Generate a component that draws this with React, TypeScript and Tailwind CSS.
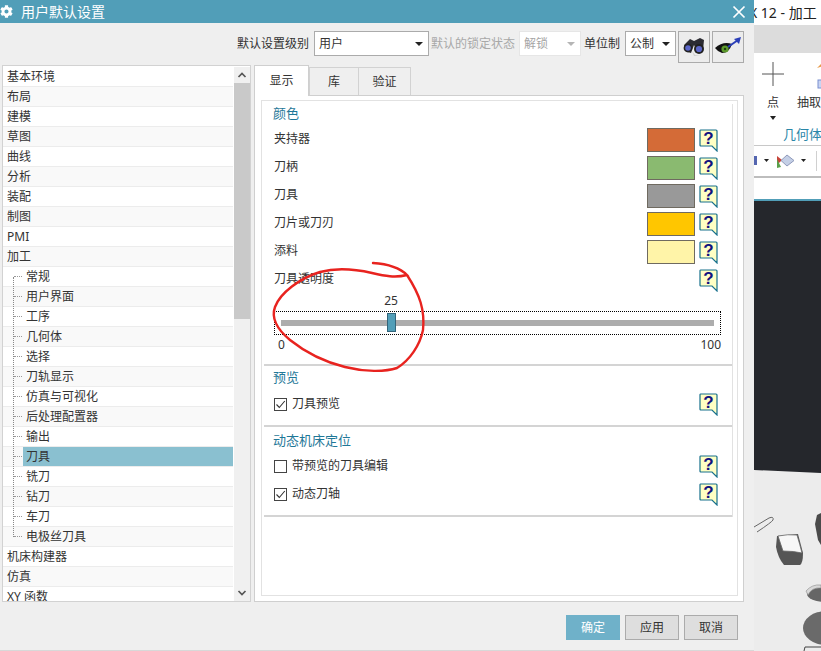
import { FaCog } from "react-icons/fa";

const top = ["基本环境", "布局", "建模", "草图", "曲线", "分析", "装配", "制图", "PMI", "加工"];
const kids = ["常规", "用户界面", "工序", "几何体", "选择", "刀轨显示", "仿真与可视化", "后处理配置器", "输出", "刀具", "铣刀", "钻刀", "车刀", "电极丝刀具"];
const tail = ["机床构建器", "仿真", "XY 函数"];
const colors = [
  ["夹持器", "bg-[#d46b37]"],
  ["刀柄", "bg-[#8aba70]"],
  ["刀具", "bg-[#999999]"],
  ["刀片或刀刃", "bg-[#ffc600]"],
  ["添料", "bg-[#fff4a8]"],
];

function Help() {
  return (
    <svg width="19" height="23" viewBox="0 0 19 23" className="shrink-0">
      <path d="M1.5 1 H17 Q18 1 18 2 V22 L13 17 H2 Q1 17 1 16 V2 Q1 1 1.5 1 Z" fill="#ffffc4" stroke="#17708c" strokeWidth="1.2" />
      <text x="9.5" y="15" textAnchor="middle" fontSize="17" fontWeight="700" fill="#12127e" fontFamily="Liberation Sans, sans-serif">?</text>
    </svg>
  );
}

function Caret({ light }: { light?: boolean }) {
  return <span className={`w-0 h-0 border-x-[4px] border-x-transparent border-t-[4px] ${light ? "border-t-[#b5b5b5]" : "border-t-[#222]"}`} />;
}

function Select({ w, label, light }: { w: string; label: string; light?: boolean }) {
  return (
    <div className={`${w} h-[25px] flex items-center justify-between pl-[4px] pr-[5px] bg-white border ${light ? "border-[#e6e6e6] text-[#a5a5a5]" : "border-[#ababab] text-[#333]"}`}>
      <span>{label}</span>
      <Caret light={light} />
    </div>
  );
}

function Check({ on }: { on?: boolean }) {
  return (
    <span className="w-[13px] h-[13px] border border-[#444] bg-white flex items-center justify-center shrink-0">
      {on && (
        <svg width="11" height="11" viewBox="0 0 11 11">
          <path d="M1.5 5.5 L4.3 8.5 L9.8 2" fill="none" stroke="#333" strokeWidth="1.1" />
        </svg>
      )}
    </span>
  );
}

function Heading({ children }: { children: string }) {
  return <div className="h-[20px] leading-[20px] pl-[9px] text-[13px] text-[#1f7898]">{children}</div>;
}

function CheckRow({ label, on }: { label: string; on?: boolean }) {
  return (
    <div className="h-[28px] flex items-center pl-[10px] pr-[14px]">
      <Check on={on} />
      <span className="ml-[5px] flex-1">{label}</span>
      <Help />
    </div>
  );
}

function TreeRow({ label, i, child, sel }: { label: string; i: number; child?: boolean; sel?: boolean }) {
  return (
    <div className={`h-[20px] flex items-center border-b border-[#ececec] ${i % 2 ? "bg-[#f9f9f9]" : "bg-white"}`}>
      {child && <span className="ml-[11px] w-[8px] border-t border-dotted border-[#999] shrink-0" />}
      <span className={`h-[19px] leading-[20px] ${child ? "ml-[1px] pl-[3px]" : "pl-[4px]"} ${sel ? "flex-1 bg-[#8ac0d0]" : ""}`}>{label}</span>
    </div>
  );
}

function Binoculars() {
  return (
    <svg width="24" height="20" viewBox="0 0 24 20">
      <path d="M2 8 L8 2 L12 4 L18 1 L22 3 L21 13 L14 12 L12 8 L9 16 L3 14 Z" fill="#2c2c33" />
      <circle cx="6" cy="11" r="4.4" fill="#222" />
      <circle cx="6" cy="11" r="2.8" fill="#5b66c8" />
      <circle cx="17" cy="12" r="5" fill="#222" />
      <circle cx="17" cy="12" r="3.1" fill="#5b66c8" />
      <path d="M10 14 L13 18 L19 19 L12 19 Z" fill="#cfcfcf" />
    </svg>
  );
}

function EyeArrow() {
  return (
    <svg width="28" height="22" viewBox="0 0 28 22">
      <path d="M1 12 Q9 5 18 8 Q15 17 8 17 Q4 16 1 12 Z" fill="#111" />
      <circle cx="11" cy="13" r="3.6" fill="#5d9a2c" />
      <circle cx="11" cy="13" r="1.2" fill="#1d3b10" />
      <path d="M14 11 L24 4" stroke="#2b3fb8" strokeWidth="2" />
      <path d="M27 1 L20 3 L25 8 Z" fill="#2b3fb8" />
    </svg>
  );
}

function Dialog() {
  let row = 0;
  return (
    <div className="w-[754px] h-full shrink-0 flex flex-col bg-[#efefef] border-b border-[#d8d8d8]">
      <div className="h-[23px] bg-[#519eb8] flex items-center text-white shrink-0">
        <FaCog className="w-[13px] h-[13px] shrink-0" />
        <span className="ml-[8px] text-[14px] flex-1">用户默认设置</span>
        <svg width="14" height="14" viewBox="0 0 14 14" className="mr-[8px]">
          <path d="M1.5 1.5 L12.5 12.5 M12.5 1.5 L1.5 12.5" stroke="#fff" strokeWidth="1.7" />
        </svg>
      </div>

      <div className="h-[42px] shrink-0 flex items-start justify-end pt-[8px] pr-[10px]">
        <span className="h-[25px] leading-[25px] mr-[5px]">默认设置级别</span>
        <Select w="w-[115px]" label="用户" />
        <span className="h-[25px] leading-[25px] ml-[2px] mr-[4px] text-[#a8a8a8]">默认的锁定状态</span>
        <Select w="w-[62px]" label="解锁" light />
        <span className="h-[25px] leading-[25px] ml-[3px] mr-[5px]">单位制</span>
        <Select w="w-[51px]" label="公制" />
        <div className="w-[32px] h-[32px] ml-[2px] flex items-center justify-center bg-[#ececec] border border-[#ababab]"><Binoculars /></div>
        <div className="w-[32px] h-[32px] ml-[2px] flex items-center justify-center bg-[#ececec] border border-[#ababab]"><EyeArrow /></div>
      </div>

      <div className="h-[537px] shrink-0 flex pl-[2px] pr-[10px]">
        <div className="w-[249px] h-full shrink-0 flex border border-[#d2d2d2] bg-white pt-[1px] overflow-hidden">
          <div className="w-[230px] shrink-0 h-full overflow-hidden">
            {top.map((t) => <TreeRow key={t} label={t} i={row++} />)}
            <div className="relative">
              <span className="absolute left-[10px] top-[10px] h-[260px] border-l border-dotted border-[#888]" />
              {kids.map((t) => <TreeRow key={t} label={t} i={row++} child sel={t === "刀具"} />)}
            </div>
            {tail.map((t) => <TreeRow key={t} label={t} i={row++} />)}
          </div>
          <div className="w-[16px] ml-[1px] h-full bg-[#f0f0f0] flex flex-col items-center">
            <svg width="10" height="16" viewBox="0 0 10 16" className="shrink-0">
              <path d="M1.5 10 L5 6.5 L8.5 10" fill="none" stroke="#555" strokeWidth="1.7" />
            </svg>
            <div className="w-full h-[236px] bg-[#c9c9c9]" />
            <div className="flex-1" />
            <svg width="10" height="16" viewBox="0 0 10 16" className="shrink-0">
              <path d="M1.5 6 L5 9.5 L8.5 6" fill="none" stroke="#555" strokeWidth="1.7" />
            </svg>
          </div>
        </div>

        <div className="flex-1 ml-[3px] flex flex-col min-w-0">
          <div className="h-[30px] flex items-end shrink-0 relative z-10">
            <div className="w-[55px] h-[31px] bg-white border border-b-0 border-[#cfcfcf] flex items-center justify-center -mb-[1px]">显示</div>
            <div className="w-[50px] h-[28px] bg-[#efefef] border border-b-0 border-[#d2d2d2] flex items-center justify-center">库</div>
            <div className="w-[52px] h-[28px] bg-[#efefef] border border-b-0 border-l-0 border-[#d2d2d2] flex items-center justify-center">验证</div>
          </div>
          <div className="flex-1 bg-white border border-[#cfcfcf] pt-[4px] pb-[5px] pl-[6px] pr-[5px] min-h-0">
            <div className="h-full border border-[#e2e2e2] pt-[3px] pr-[4px] pl-[2px]">
              <div className="border-r border-[#e2e2e2] text-[#333]">
                <div className="h-[18px] flex items-center"><Heading>颜色</Heading></div>
                <div className="h-[4px]" />
                {colors.map(([label, bg]) => (
                  <div key={label} className="h-[28px] flex items-center pl-[10px] pr-[14px]">
                    <span className="flex-1 -mt-[2px]">{label}</span>
                    <span className={`w-[48px] h-[24px] border border-[#6f6a60] ${bg}`} />
                    <span className="ml-[4px]"><Help /></span>
                  </div>
                ))}
                <div className="h-[28px] flex items-center pl-[10px] pr-[14px]">
                  <span className="flex-1 -mt-[2px]">刀具透明度</span>
                  <Help />
                </div>
                <div className="h-[17px] leading-[13px] ml-[117px] w-[20px] text-center">25</div>
                <div className="ml-[10px] w-[447px] h-[24px] border border-dotted border-black flex items-center px-[6px]">
                  <div className="relative w-full h-[6px] bg-[#adadad]">
                    <span className="absolute left-[106px] -top-[7px] w-[9px] h-[19px] bg-[#519eb8] border border-[#33657a]" />
                  </div>
                </div>
                <div className="w-[447px] ml-[10px] h-[20px] flex items-center justify-between pl-[4px]">
                  <span>0</span>
                  <span>100</span>
                </div>
                <div className="h-[11px] border-b-2 border-[#d4d4d4]" />
                <div className="h-[1px]" />
                <Heading>预览</Heading>
                <div className="h-[3px]" />
                <CheckRow label="刀具预览" on />
                <div className="h-[9px] border-b-2 border-[#d4d4d4]" />
                <div className="h-[3px]" />
                <Heading>动态机床定位</Heading>
                <div className="h-[2px]" />
                <CheckRow label="带预览的刀具编辑" />
                <CheckRow label="动态刀轴" on />
                <div className="h-[9px] border-b-2 border-[#d4d4d4]" />
              </div>
            </div>
          </div>
        </div>
      </div>

      <div className="flex-1 flex items-start justify-end gap-[5px] pt-[13px] pr-[16px]">
        <div className="w-[54px] h-[25px] bg-[#6fb1c9] text-white flex items-center justify-center">确定</div>
        <div className="w-[54px] h-[25px] bg-[#dedede] border border-[#ababab] flex items-center justify-center">应用</div>
        <div className="w-[54px] h-[25px] bg-[#dedede] border border-[#ababab] flex items-center justify-center">取消</div>
      </div>
    </div>
  );
}

function Background() {
  return (
    <div className="flex-1 h-full flex flex-col bg-white min-w-0 overflow-hidden">
      <div className="h-[25px] shrink-0 flex items-center text-[14px] text-[#222] overflow-hidden whitespace-nowrap">
        <span className="-ml-[5px]">X 12 - 加工</span>
      </div>
      <div className="h-[28px] shrink-0 bg-[#dcdcdc]" />
      <div className="h-[93px] shrink-0 border-b border-[#c8c8c8] flex flex-col">
        <div className="flex-1 flex pl-[5px] gap-[10px] overflow-hidden whitespace-nowrap">
          <div className="w-[28px] flex flex-col items-center shrink-0">
            <svg width="22" height="24" viewBox="0 0 22 24" className="mt-[9px]">
              <path d="M11 0 V24 M0 12 H22" stroke="#555" strokeWidth="1" />
            </svg>
            <span className="mt-[9px] leading-[16px]">点</span>
            <span className="mt-[5px] w-0 h-0 border-x-[3px] border-x-transparent border-t-[4px] border-t-[#222]" />
          </div>
          <div className="flex flex-col shrink-0 relative">
            <svg width="20" height="30" viewBox="0 0 20 30" className="absolute left-[20px] top-[7px]">
              <path d="M0 8 L6 2 L7 6 Z" fill="#e89b4b" />
              <rect x="1" y="20" width="10" height="8" fill="#c9d4f2" stroke="#7a8fd0" />
            </svg>
            <span className="mt-[42px] leading-[16px]">抽取</span>
          </div>
        </div>
        <div className="h-[21px] pl-[29px] text-[13px] leading-[21px] text-[#2a86a8] whitespace-nowrap">几何体</div>
      </div>
      <div className="h-[32px] shrink-0 border-b-2 border-[#bdbdbd] flex items-center">
        <svg width="56" height="20" viewBox="0 0 56 20" className="shrink-0">
          <rect x="0" y="5" width="3" height="9" fill="#5566b0" />
          <path d="M10 8 H15 L12.5 11 Z" fill="#222" />
          <path d="M23 5 L28 9 L23 14 Z" fill="#c8443a" />
          <path d="M23 8 L27 16 L23 17 Z" fill="#59a04a" />
          <path d="M33 4 L40 9.5 L33 15 L27 9.5 Z" fill="#c4cfe6" stroke="#8f9abb" />
          <path d="M47 8 H52 L49.5 11 Z" fill="#222" />
        </svg>
        <span className="ml-[6px] w-px h-[20px] bg-[#d0d0d0]" />
      </div>
      <div className="h-[23px] shrink-0 border-b-2 border-[#519eb8]" />
      <div className="flex-1 min-h-0">
        <svg width="67" height="450" viewBox="754 201 67 450" className="block">
          <rect x="754" y="201" width="67" height="450" fill="#ececec" />
          <path d="M754 201 H821 V473 L754 470 Z" fill="#25272c" />
          <path d="M754 527 L769 518 Q774 516 773 520 Q772 522 757 532" fill="none" stroke="#666" strokeWidth="1" />
          <path d="M777 536 L776 547 Q778 558 784 565 L800 565 Q803 563 803 553 L798 534 Z" fill="#555" />
          <path d="M778 536 Q788 534 797 535 Q800 545 802 553 Q794 551 783 551 Q781 545 778 536 Z" fill="#f7f7f7" stroke="#666" strokeWidth="0.8" />
          <path d="M821 513 L817 515 L815 524 L818 540 L821 545 Z" fill="#4a4a4a" />
          <ellipse cx="826" cy="594" rx="19" ry="8" fill="#666" />
          <path d="M806 591 Q812 584 821 585 L821 588 Q812 587 808 595 Z" fill="#d8d8d8" stroke="#888" strokeWidth="0.6" />
          <ellipse cx="826" cy="628" rx="23" ry="17" fill="#6a6a6a" />
          <path d="M804 651 L805 647 H821" fill="none" stroke="#444" />
        </svg>
      </div>
    </div>
  );
}

export default function App() {
  return (
    <div className="relative w-[821px] h-[651px] overflow-hidden flex text-[12px] text-[#333] font-['Noto_Sans','Noto_Sans_CJK_SC',sans-serif]">
      <Dialog />
      <Background />
      <svg width="821" height="651" className="absolute inset-0 pointer-events-none">
        <path
          d="M373 263 C388 264 400 268 407 275 C395 278 385 276 372 273 C350 268 335 268 320 272 C300 278 280 293 275 307 C271 318 278 330 290 340 C305 352 325 362 345 367 C365 372 385 372 397 368 C410 360 420 345 423 330 C425 310 420 295 407 275"
          fill="none"
          stroke="#e8231f"
          strokeWidth="2.4"
          strokeLinecap="round"
        />
      </svg>
    </div>
  );
}
